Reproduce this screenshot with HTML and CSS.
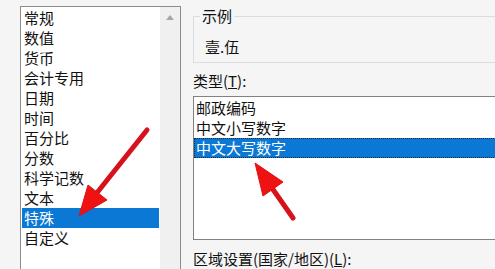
FILE: index.html
```html
<!DOCTYPE html>
<html lang="zh-CN">
<head>
<meta charset="utf-8">
<title>设置单元格格式</title>
<link rel="stylesheet" href="styles.css">
</head>
<body>
<div class="dialog">
  <div class="category-list">
    <ul class="items">
      <li>常规</li>
      <li>数值</li>
      <li>货币</li>
      <li>会计专用</li>
      <li>日期</li>
      <li>时间</li>
      <li>百分比</li>
      <li>分数</li>
      <li>科学记数</li>
      <li>文本</li>
      <li class="selected">特殊</li>
      <li>自定义</li>
    </ul>
    <div class="scrollbar"><span class="arrow-up"></span></div>
  </div>
  <div class="options">
    <fieldset class="sample">
      <legend>示例</legend>
      <div class="sample-value">壹.伍</div>
    </fieldset>
    <div class="label label-type">类型(<u>T</u>):</div>
    <ul class="type-list">
      <li>邮政编码</li>
      <li>中文小写数字</li>
      <li class="selected">中文大写数字</li>
    </ul>
    <div class="label label-locale">区域设置(国家/地区)(<u>L</u>):</div>
  </div>
  <svg class="annotations" width="495" height="269" viewBox="0 0 495 269">
    <line x1="147" y1="130" x2="96" y2="194" class="shaft"/>
    <polygon points="79,216 107,200 88,185" class="head"/>
    <line x1="293" y1="218" x2="272" y2="188" class="shaft"/>
    <polygon points="255,163 283,182 263,196" class="head"/>
  </svg>
</div>
</body>
</html>
```

FILE: styles.css
```css
html, body {
  margin: 0;
  padding: 0;
}

body {
  background: #f5f5f5;
  overflow: hidden;
  font-family: "Noto Sans CJK SC", "Noto Sans", sans-serif;
  font-size: 15px;
  line-height: 20px;
  color: #111;
}

.dialog {
  position: relative;
  display: flex;
  gap: 12px;
  width: 495px;
  height: 269px;
  padding: 6px 0 0 20px;
  box-sizing: border-box;
  overflow: hidden;
}

.category-list {
  display: flex;
  flex-shrink: 0;
  width: 161px;
  height: 300px;
  box-sizing: border-box;
  border: 1px solid #8c8c8c;
  background: #fff;
}

.items {
  list-style: none;
  margin: 0;
  padding: 1px;
  flex: 1;
}

.items li {
  height: 20px;
  line-height: 20px;
  padding-left: 2px;
  white-space: nowrap;
}

.items li.selected {
  background: #0a78d4;
  color: #fff;
}

.scrollbar {
  width: 20px;
  flex-shrink: 0;
  background: #f0f0f0;
  display: flex;
  justify-content: center;
  padding-top: 8px;
  box-sizing: border-box;
}

.arrow-up {
  width: 0;
  height: 0;
  border-left: 4px solid transparent;
  border-right: 4px solid transparent;
  border-bottom: 5px solid #a6a6a6;
}

.options {
  flex-shrink: 0;
  width: 340px;
}

.sample {
  margin: 0;
  padding: 11px 0 5px 6px;
  border: 1px solid #dcdcdc;
}

.sample legend {
  padding: 0 2px;
  line-height: 20px;
}

.sample-value {
  padding-left: 5px;
  line-height: 20px;
}

.label {
  line-height: 20px;
  white-space: nowrap;
}

.label-type {
  margin-top: 8px;
}

.label-locale {
  margin-top: 9px;
}

.type-list {
  list-style: none;
  margin: 5px 0 0 0;
  padding: 1px 0 0 0;
  height: 144px;
  box-sizing: border-box;
  border: 1px solid #828282;
  background: #fff;
}

.type-list li {
  height: 20px;
  line-height: 20px;
  padding-left: 2px;
  box-sizing: border-box;
  white-space: nowrap;
}

.type-list li.selected {
  background: #0a78d4;
  color: #fff;
  border: 1px dotted #1c2a3a;
  line-height: 18px;
  padding-left: 1px;
}

.annotations {
  position: absolute;
  left: 0;
  top: 0;
  pointer-events: none;
}

.annotations .shaft {
  stroke: #d8121c;
  stroke-width: 5;
  stroke-linecap: round;
}

.annotations .head {
  fill: #ee1212;
  stroke: #e01018;
  stroke-width: 1;
  stroke-linejoin: round;
}
```
